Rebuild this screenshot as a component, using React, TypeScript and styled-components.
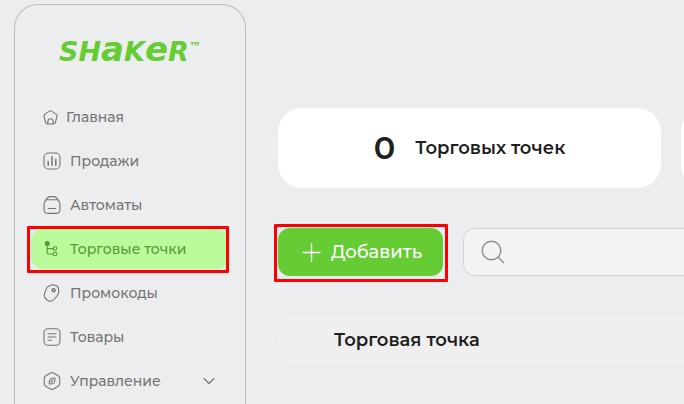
import React from 'react';
import styled, { createGlobalStyle, css } from 'styled-components';

const GlobalStyle = createGlobalStyle`
  *, *::before, *::after { box-sizing: border-box; }
  body {
    margin: 0;
    background: #ecedef;
    color: #1f1f1f;
    font-family: Montserrat, Inter, "Noto Sans", sans-serif;
  }
`;

const Shell = styled.div`
  display: flex;
  min-height: 100vh;
  padding: 4px 0 0 14px;
  overflow: hidden;
`;

const Sidebar = styled.aside`
  flex: 0 0 232px;
  padding: 32px 16px 0;
  border: 1px solid #b9bcc4;
  border-bottom: 0;
  border-radius: 24px 24px 0 0;
`;

const Logo = styled.a`
  display: flex;
  align-items: flex-start;
  height: 60px;
  padding: 1px 0 0 28px;
  color: #66cc33;
  font-family: "DejaVu Sans", sans-serif;
  font-size: 27px;
  font-style: italic;
  font-weight: 700;
  line-height: 28px;
  text-decoration: none;
`;

const TallLetter = styled.span`
  font-size: 34px;
  line-height: 20px;
`;

const Trademark = styled.span`
  font-size: 12px;
  line-height: 18px;
`;

const Nav = styled.nav`
  display: flex;
  flex-direction: column;
  gap: 4px;
`;

const marked = css`
  position: relative;
  &::after {
    content: '';
    position: absolute;
    border: 3px solid #ff0000;
    border-radius: 1px;
    pointer-events: none;
  }
`;

const NavItem = styled.a<{ $active?: boolean; $gap?: number }>`
  display: flex;
  align-items: center;
  gap: ${(p) => p.$gap ?? 8}px;
  height: 40px;
  padding: 0 14px 0 12px;
  border-radius: 12px;
  color: #757575;
  font-size: 14px;
  font-weight: 500;
  line-height: 20px;
  text-decoration: none;
  svg { flex: none; }
  ${(p) =>
    p.$active &&
    css`
      ${marked}
      background: #bbfb9b;
      color: #579a38;
      &::after { inset: -3px 0 -4px -4px; }
    `}
`;

const NavLabel = styled.span`
  flex: 1;
`;

const Main = styled.main`
  flex: 1;
  min-width: 0;
  padding: 104px 0 40px 32px;
`;

const Content = styled.div`
  display: flex;
  flex-direction: column;
  gap: 40px;
  min-width: 1189px;
`;

const Cards = styled.section`
  display: grid;
  grid-template-columns: repeat(3, minmax(383px, 1fr));
  gap: 20px;
`;

const Card = styled.div`
  display: flex;
  align-items: center;
  justify-content: center;
  gap: 20px;
  min-height: 80px;
  border-radius: 24px;
  background: #ffffff;
`;

const Count = styled.span`
  font-size: 32px;
  font-weight: 600;
  line-height: 40px;
`;

const CardLabel = styled.span`
  font-size: 18px;
  font-weight: 600;
  line-height: 24px;
`;

const Toolbar = styled.div`
  display: flex;
  gap: 20px;
`;

const AddButton = styled.button`
  ${marked}
  display: flex;
  align-items: center;
  gap: 10px;
  height: 48px;
  padding: 0 21px 0 24px;
  border: 0;
  border-radius: 12px;
  background: #66cc33;
  color: #ffffff;
  font: inherit;
  font-size: 18px;
  font-weight: 500;
  line-height: 24px;
  &::after { inset: -4px -5px -6px -4px; }
`;

const Search = styled.label`
  display: flex;
  flex: 1;
  align-items: center;
  gap: 12px;
  height: 48px;
  padding: 0 16px;
  border: 1px solid #d2d3d6;
  border-radius: 12px;
  background: #f2f3f5;
`;

const SearchInput = styled.input`
  flex: 1;
  border: 0;
  outline: 0;
  background: transparent;
  font: inherit;
`;

const Table = styled.table`
  width: 100%;
  border-collapse: collapse;
`;

const HeadCell = styled.th`
  height: 48px;
  padding: 0 56px;
  border-radius: 24px;
  background: #efefef;
  font-size: 18px;
  font-weight: 600;
  line-height: 24px;
  text-align: left;
`;

type IconProps = { size?: number; children: React.ReactNode };

const Icon = ({ size = 18, children }: IconProps) => (
  <svg
    width={size}
    height={size}
    viewBox={`0 0 ${size} ${size}`}
    fill="none"
    stroke="currentColor"
    strokeWidth="1.1"
    strokeLinecap="round"
    strokeLinejoin="round"
    aria-hidden="true"
  >
    {children}
  </svg>
);

const HomeIcon = () => (
  <Icon size={15}>
    <path d="M6.5 1.1Q7.5.5 8.5 1.1L13.3 4.4Q14.3 5.2 14 6.3L12.5 12Q12 14 10.3 14H4.7Q3 14 2.5 12L1 6.3Q.7 5.2 1.7 4.4Z" />
    <path d="M4.9 14v-2.6a2.6 2.6 0 0 1 5.2 0V14" />
  </Icon>
);

const SalesIcon = () => (
  <Icon>
    <rect x="1" y="1" width="16" height="16" rx="4.5" />
    <path d="M5.2 9.5v3.7M9 4.8v8.4M12.8 7.5v5.7" strokeWidth="1.5" />
  </Icon>
);

const MachineIcon = () => (
  <Icon>
    <path d="M3.2 3.8H14.8Q16.9 5.4 16.9 8V13.5Q16.9 17.4 13.2 17.4H4.8Q1.1 17.4 1.1 13.5V8Q1.1 5.4 3.2 3.8Z" />
    <path d="M3.2 3.8Q4.5.6 7 .6H11Q13.5.6 14.8 3.8M5.2 12.5H12.8" />
  </Icon>
);

const PointsIcon = () => (
  <Icon>
    <circle cx="4.2" cy="3.5" r="2" fill="currentColor" />
    <path d="M4.2 5.5V12.4Q4.2 14 5.8 14H10M4.2 8.6H10" />
    <circle cx="12" cy="8.6" r="1.8" />
    <circle cx="12" cy="14" r="1.8" />
  </Icon>
);

const PromoIcon = () => (
  <Icon>
    <path d="M10.2.9L12.8 1.5Q15.3 2.1 15.5 4.7L15.7 8Q15.7 9.5 14.8 10.8L11.5 15Q8.5 18.5 4.8 16.4L3.8 15.7Q.3 13.2 1.6 9.2L3.3 4.9Q3.9 3.3 5.3 2.4L7.5 1.2Q8.8.6 10.2.9Z" />
    <circle cx="10.6" cy="6.3" r="1.5" strokeWidth="1.5" />
  </Icon>
);

const GoodsIcon = () => (
  <Icon>
    <rect x="1" y=".8" width="16" height="16.4" rx="4" />
    <path d="M5 5.8h8M5 9h8M5 12.2h3.4" />
  </Icon>
);

const ManageIcon = () => (
  <Icon>
    <path d="M7.4 1.1Q9 .2 10.6 1.1L15.2 3.7Q16.8 4.7 16.8 6.4V11.6Q16.8 13.3 15.2 14.3L10.6 16.9Q9 17.8 7.4 16.9L2.8 14.3Q1.2 13.3 1.2 11.6V6.4Q1.2 4.7 2.8 3.7Z" />
    <path d="M12 6Q12.3 9.2 10.9 10.8Q9.2 12.2 6.2 12Q6 8.8 7.3 7.3Q9 5.8 12 6ZM8 10L10 8" />
  </Icon>
);

const ChevronIcon = () => (
  <Icon size={12}>
    <path d="M1 3.5L6 8.5L11 3.5" />
  </Icon>
);

const PlusIcon = () => (
  <Icon size={19}>
    <path d="M9.5 1V18M1 9.5H18" strokeWidth="1.4" />
  </Icon>
);

const SearchIcon = () => (
  <Icon size={26}>
    <g stroke="#929294" strokeWidth="1.4">
      <circle cx="11.5" cy="11.5" r="9.3" />
      <path d="M18.2 18.2L23.5 23.5" />
    </g>
  </Icon>
);

const items = [
  { label: 'Главная', icon: <HomeIcon />, gap: 8 },
  { label: 'Продажи', icon: <SalesIcon />, gap: 9 },
  { label: 'Автоматы', icon: <MachineIcon />, gap: 9 },
  { label: 'Торговые точки', icon: <PointsIcon />, gap: 9, active: true },
  { label: 'Промокоды', icon: <PromoIcon />, gap: 9 },
  { label: 'Товары', icon: <GoodsIcon />, gap: 9 },
  { label: 'Управление', icon: <ManageIcon />, gap: 9, nested: true },
];

export default function App() {
  return (
    <>
      <GlobalStyle />
      <Shell>
        <Sidebar>
          <Logo href="#" aria-label="SHAKER™">
            <span>
              SH<TallLetter>a</TallLetter>K<TallLetter>e</TallLetter>R
            </span>
            <Trademark>™</Trademark>
          </Logo>
          <Nav>
            {items.map((item) => (
              <NavItem
                key={item.label}
                href="#"
                $active={item.active}
                $gap={item.gap}
                aria-current={item.active ? 'page' : undefined}
              >
                {item.icon}
                <NavLabel>{item.label}</NavLabel>
                {item.nested && <ChevronIcon />}
              </NavItem>
            ))}
          </Nav>
        </Sidebar>
        <Main>
          <Content>
            <Cards>
              <Card>
                <Count>0</Count>
                <CardLabel>Торговых точек</CardLabel>
              </Card>
              <Card />
              <Card />
            </Cards>
            <Toolbar>
              <AddButton type="button">
                <PlusIcon />
                Добавить
              </AddButton>
              <Search>
                <SearchIcon />
                <SearchInput type="search" aria-label="Поиск" />
              </Search>
            </Toolbar>
            <Table>
              <thead>
                <tr>
                  <HeadCell scope="col">Торговая точка</HeadCell>
                </tr>
              </thead>
            </Table>
          </Content>
        </Main>
      </Shell>
    </>
  );
}
